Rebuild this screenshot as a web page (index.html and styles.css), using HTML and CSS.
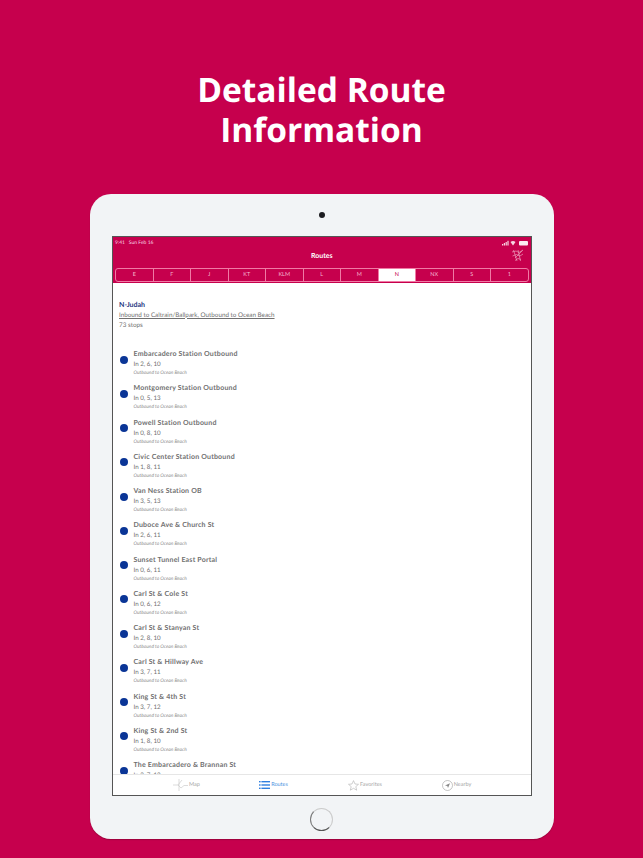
FILE: index.html
```html
<!DOCTYPE html>
<html lang="en">
<head>
    <meta charset="UTF-8">
    <title>Detailed Route Information</title>
    <link rel="stylesheet" href="styles.css">
</head>
<body>
    <h1 class="headline">Detailed Route<br>Information</h1>
    <div class="tablet">
        <div class="camera"></div>
        <div class="screen">
            <div class="app-header">
                <div class="status-bar">
                    <span>9:41&nbsp;&nbsp;&nbsp;Sun Feb 16</span>
                    <svg class="status-icons" width="27" height="6" viewBox="0 0 27 6">
                        <rect x="0" y="4" width="1.2" height="1.5" fill="#f7d5e2"/>
                        <rect x="1.8" y="3" width="1.2" height="2.5" fill="#f7d5e2"/>
                        <rect x="3.6" y="2" width="1.2" height="3.5" fill="#f7d5e2"/>
                        <rect x="5.4" y="0.8" width="1.2" height="4.7" fill="#f7d5e2"/>
                        <path d="M8.5 2 Q11 0 13.500 2 L11 5.500 Z" fill="#f7d5e2"/>
                        <rect x="17" y="1" width="9" height="4.500" rx="1" fill="#fbeaf1"/>
                    </svg>
                </div>
                <div class="nav-bar">
                    <span class="nav-title">Routes</span>
                    <svg class="nav-map" width="13" height="13" viewBox="0 0 13 13" fill="none" stroke="#ec9dbb" stroke-width="0.7">
                        <path d="M1 3 L5 2 L8 3.500 L12 1 M1.500 7 L5.500 5.500 L9 7 L12 5 M4 11.500 L7 9.500 L10 10.500 M2.500 1 L6 12 M7 1 L9.500 12 M11.500 1.500 L4 9"/>
                    </svg>
                </div>
                <div class="segments">
                    <div class="segment">E</div>
                    <div class="segment">F</div>
                    <div class="segment">J</div>
                    <div class="segment">KT</div>
                    <div class="segment">KLM</div>
                    <div class="segment">L</div>
                    <div class="segment">M</div>
                    <div class="segment active">N</div>
                    <div class="segment">NX</div>
                    <div class="segment">S</div>
                    <div class="segment">1</div>
                </div>
            </div>

            <div class="content">
                <div class="route-info">
                    <h2>N-Judah</h2>
                    <p class="route-link">Inbound to Caltrain/Ballpark, Outbound to Ocean Beach</p>
                    <p class="route-stops">73 stops</p>
                </div>
                <div class="stop"><span class="dot"></span><div><h3>Embarcadero Station Outbound</h3><p class="times">In 2, 6, 10</p><p class="dir">Outbound to Ocean Beach</p></div></div>
                <div class="stop"><span class="dot"></span><div><h3>Montgomery Station Outbound</h3><p class="times">In 0, 5, 13</p><p class="dir">Outbound to Ocean Beach</p></div></div>
                <div class="stop"><span class="dot"></span><div><h3>Powell Station Outbound</h3><p class="times">In 0, 8, 10</p><p class="dir">Outbound to Ocean Beach</p></div></div>
                <div class="stop"><span class="dot"></span><div><h3>Civic Center Station Outbound</h3><p class="times">In 1, 8, 11</p><p class="dir">Outbound to Ocean Beach</p></div></div>
                <div class="stop"><span class="dot"></span><div><h3>Van Ness Station OB</h3><p class="times">In 3, 5, 13</p><p class="dir">Outbound to Ocean Beach</p></div></div>
                <div class="stop"><span class="dot"></span><div><h3>Duboce Ave &amp; Church St</h3><p class="times">In 2, 6, 11</p><p class="dir">Outbound to Ocean Beach</p></div></div>
                <div class="stop"><span class="dot"></span><div><h3>Sunset Tunnel East Portal</h3><p class="times">In 0, 6, 11</p><p class="dir">Outbound to Ocean Beach</p></div></div>
                <div class="stop"><span class="dot"></span><div><h3>Carl St &amp; Cole St</h3><p class="times">In 0, 6, 12</p><p class="dir">Outbound to Ocean Beach</p></div></div>
                <div class="stop"><span class="dot"></span><div><h3>Carl St &amp; Stanyan St</h3><p class="times">In 2, 8, 10</p><p class="dir">Outbound to Ocean Beach</p></div></div>
                <div class="stop"><span class="dot"></span><div><h3>Carl St &amp; Hillway Ave</h3><p class="times">In 3, 7, 11</p><p class="dir">Outbound to Ocean Beach</p></div></div>
                <div class="stop"><span class="dot"></span><div><h3>King St &amp; 4th St</h3><p class="times">In 3, 7, 12</p><p class="dir">Outbound to Ocean Beach</p></div></div>
                <div class="stop"><span class="dot"></span><div><h3>King St &amp; 2nd St</h3><p class="times">In 1, 8, 10</p><p class="dir">Outbound to Ocean Beach</p></div></div>
                <div class="stop"><span class="dot"></span><div><h3>The Embarcadero &amp; Brannan St</h3><p class="times">In 3, 7, 12</p><p class="dir">Outbound to Ocean Beach</p></div></div>
            </div>

            <div class="tab-bar">
                <div class="tab">
                    <svg width="15" height="14" viewBox="0 0 15 14" fill="none" stroke="#c4c4c4" stroke-width="0.6">
                        <path d="M0 7 H5 L9 2 M5 7 L8 10 L11 7.500 H15 M6 1 V13"/>
                    </svg>
                    <span>Map</span>
                </div>
                <div class="tab tab-active">
                    <svg width="11" height="8" viewBox="0 0 11 8" fill="#2f7fe0">
                        <rect x="0" y="0" width="1.600" height="1.400"/>
                        <rect x="2.400" y="0" width="8.600" height="1.400"/>
                        <rect x="0" y="3.300" width="1.600" height="1.400"/>
                        <rect x="2.400" y="3.300" width="8.600" height="1.400"/>
                        <rect x="0" y="6.600" width="1.600" height="1.400"/>
                        <rect x="2.400" y="6.600" width="8.600" height="1.400"/>
                    </svg>
                    <span>Routes</span>
                </div>
                <div class="tab tab-fav">
                    <svg width="11" height="11" viewBox="0 0 11 11" fill="none" stroke="#b0b0b0" stroke-width="0.6">
                        <path d="M5.500 0.600 L7 4 L10.500 4.300 L7.800 6.600 L8.700 10.200 L5.500 8.300 L2.300 10.200 L3.200 6.600 L0.500 4.300 L4 4 Z"/>
                    </svg>
                    <span>Favorites</span>
                </div>
                <div class="tab">
                    <svg width="11" height="11" viewBox="0 0 11 11" fill="none" stroke="#a0a0a0" stroke-width="0.6">
                        <circle cx="5.500" cy="5.500" r="5"/>
                        <path d="M3 5.500 L8 3.200 L6 8 L5.300 5.900 Z" fill="#8a8a8a" stroke="none"/>
                    </svg>
                    <span>Nearby</span>
                </div>
            </div>
        </div>
        <div class="home-button"></div>
    </div>
</body>
</html>
```

FILE: styles.css
```css
* {
    box-sizing: border-box;
}
html, body {
    height: 858px;
    overflow: hidden;
}
body {
    margin: 0;
    background: #c6004d;
    font-family: Lato, 'Open Sans', sans-serif;
    color: #555;
    display: flex;
    flex-direction: column;
    align-items: center;
    text-rendering: geometricPrecision;
}
p, h2, h3 {
    margin: 0;
}
.headline {
    margin: 68.500px 0 44.500px;
    font-family: 'Open Sans', sans-serif;
    font-size: 33.500px;
    font-weight: 700;
    line-height: 40.500px;
    text-align: center;
    color: #fff;
}
.tablet {
    width: 464px;
    height: 645px;
    background: #f2f4f6;
    border-radius: 21px;
    padding: 18px 22px 0;
    display: flex;
    flex-direction: column;
    align-items: center;
    flex-shrink: 0;
    box-shadow: 0 1px 1px rgba(80, 0, 30, 0.35);
}
.camera {
    width: 6px;
    height: 6px;
    border-radius: 50%;
    background: #1c1c20;
    margin-bottom: 18px;
}
.screen {
    width: 420px;
    height: 560px;
    border: 1.5px solid #555;
    background: #fff;
    display: flex;
    flex-direction: column;
}
.home-button {
    width: 23px;
    height: 23px;
    border-radius: 50%;
    border: 1.2px solid #ccc;
    border-bottom-color: #555;
    border-left-color: #777;
    margin-top: 12px;
}

/* app header */
.app-header {
    background: #c6004d;
    height: 46px;
    flex-shrink: 0;
    padding: 0 2px 0 2.500px;
    color: #fff;
}
.status-bar {
    height: 9px;
    padding-top: 2px;
    display: flex;
    justify-content: space-between;
    align-items: center;
    font-size: 5px;
    color: #f7d5e2;
}
.nav-bar {
    height: 21.500px;
    padding-bottom: 2px;
    display: flex;
    justify-content: center;
    align-items: center;
    position: relative;
}
.nav-title {
    font-size: 7px;
    font-weight: 700;
}
.nav-map {
    position: absolute;
    right: 5px;
    top: 3px;
}
.segments {
    display: flex;
    height: 14px;
    border: 0.8px solid #f07aa5;
    border-radius: 3px;
    overflow: hidden;
}
.segment {
    flex: 1;
    border-left: 0.8px solid #f07aa5;
    font-size: 5.500px;
    display: flex;
    align-items: center;
    justify-content: center;
    color: #f5b8cf;
}
.segment:first-child {
    border-left: none;
}
.segment.active {
    background: #fff;
    color: #c6004d;
}

/* list */
.content {
    flex: 1;
    overflow: hidden;
    padding-left: 6.500px;
}
.route-info {
    padding-top: 16.500px;
    padding-bottom: 15.500px;
}
.route-info h2 {
    font-size: 7px;
    line-height: 10px;
    font-weight: 700;
    color: #24357f;
}
.route-link {
    font-size: 6.300px;
    line-height: 11px;
    color: #707070;
    text-decoration: underline;
}
.route-stops {
    font-size: 6.300px;
    line-height: 10px;
    color: #707070;
}
.stop {
    display: flex;
    align-items: center;
    height: 34.250px;
    gap: 6px;
}
.dot {
    width: 8px;
    height: 8px;
    margin-left: 0.500px;
    margin-bottom: 7px;
    border-radius: 50%;
    background: #0a3596;
    flex-shrink: 0;
}
.stop h3 {
    font-size: 7px;
    line-height: 11px;
    font-weight: 700;
    color: #707070;
    letter-spacing: 0.2px;
}
.times {
    font-size: 6.200px;
    line-height: 10px;
    color: #707070;
}
.dir {
    font-size: 4.800px;
    line-height: 7px;
    font-style: italic;
    color: #8a8a8a;
}

/* tab bar */
.tab-bar {
    height: 21px;
    flex-shrink: 0;
    border-top: 1px solid #e6e6e6;
    display: flex;
    justify-content: center;
    background: #fff;
}
.tab {
    width: 90px;
    display: flex;
    align-items: center;
    justify-content: center;
    gap: 1px;
    font-size: 5.500px;
    color: #a5a5a5;
}
.tab-active {
    color: #4a8fe0;
    padding-right: 6px;
}
.tab-fav {
    padding-right: 3px;
}
```
